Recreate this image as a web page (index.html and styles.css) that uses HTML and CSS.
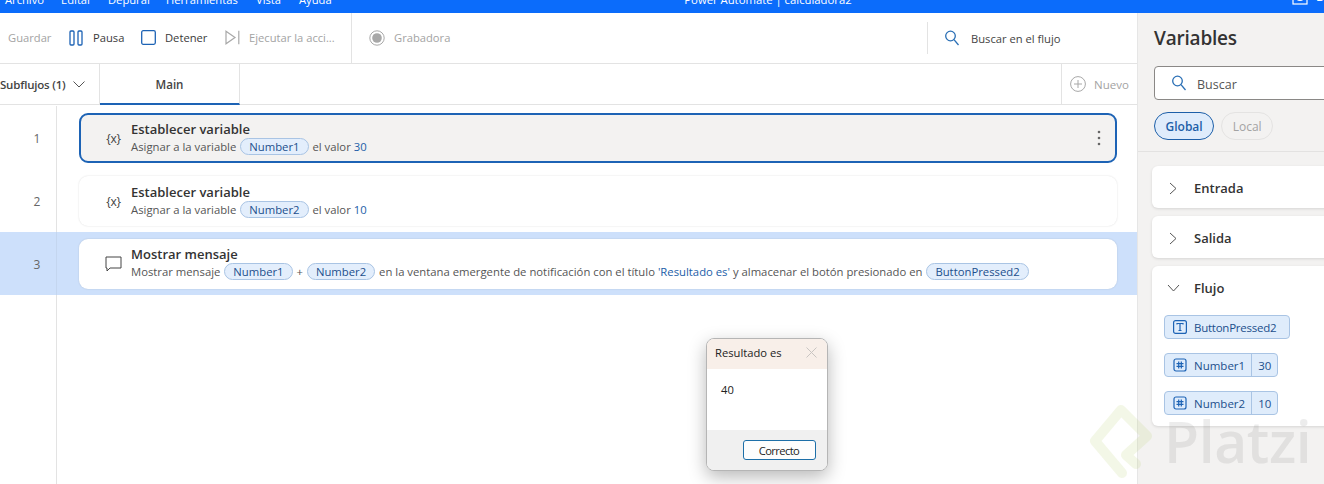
FILE: index.html
```html
<!DOCTYPE html>
<html lang="es">
<head>
<meta charset="utf-8">
<title>Power Automate | calculadora2</title>
<link rel="stylesheet" href="styles.css">
</head>
<body>
<div class="app">
  <header class="titlebar">
    <nav class="menu">
      <span class="m1">Archivo</span><span class="m2">Editar</span><span class="m3">Depurar</span><span class="m4">Herramientas</span><span class="m5">Vista</span><span class="m6">Ayuda</span>
    </nav>
    <div class="apptitle">Power Automate | calculadora2</div>
    <div class="account">
      <svg width="16" height="16" viewBox="0 0 16 16" fill="none" stroke="#fff" stroke-width="1.2"><rect x="1" y="1" width="14" height="14"/><circle cx="8" cy="8" r="3.500"/></svg>
      <span>B</span>
    </div>
  </header>
  <div class="workspace">
    <main class="main">
      <div class="toolbar">
        <div class="tool-group">
          <span class="tool muted save">Guardar</span>
          <span class="tool pause">
            <svg width="14" height="16" viewBox="0 0 14 16" fill="none" stroke="#1d63b5" stroke-width="1.3"><rect x="1" y="1" width="4" height="14" rx="1"/><rect x="9" y="1" width="4" height="14" rx="1"/></svg>
            Pausa</span>
          <span class="tool stop">
            <svg width="15" height="15" viewBox="0 0 15 15" fill="none" stroke="#1d63b5" stroke-width="1.3"><rect x=".7" y=".7" width="13.600" height="13.600" rx="1.500"/></svg>
            Detener</span>
          <span class="tool muted run">
            <svg width="15" height="15" viewBox="0 0 15 15" fill="none" stroke="#a8a8a8" stroke-width="1.2"><path d="M1 1.200 10 7.500 1 13.800Z"/><path d="M13.800 .8V14.200"/></svg>
            Ejecutar la acci...</span>
        </div>
        <div class="tool-group rec">
          <span class="tool muted">
            <svg width="16" height="16" viewBox="0 0 16 16"><circle cx="8" cy="8" r="7.200" fill="none" stroke="#a8a8a8"/><circle cx="8" cy="8" r="4.800" fill="#a8a8a8"/></svg>
            Grabadora</span>
        </div>
        <div class="flow-search">
          <svg width="16" height="16" viewBox="0 0 16 16" fill="none" stroke="#2a6fb5" stroke-width="1.3"><circle cx="6.500" cy="6" r="4.800"/><path d="M10 9.700 14.500 15"/></svg>
          <span>Buscar en el flujo</span>
        </div>
      </div>
      <div class="tabs">
        <div class="subflows">Subflujos (1)
          <svg width="12" height="7" viewBox="0 0 12 7" fill="none" stroke="#555" stroke-width="1"><path d="M.5.5 6 6l5.500-5.500"/></svg>
        </div>
        <div class="tab">Main</div>
        <div class="new">
          <svg width="16" height="16" viewBox="0 0 16 16" fill="none" stroke="#a8a8a8"><circle cx="8" cy="8" r="7.400"/><path d="M8 4v8M4 8h8"/></svg>
          Nuevo
        </div>
      </div>
      <div class="flow">
        <div class="row">
          <div class="num">1</div>
          <div class="lane">
            <div class="card selected">
              <div class="aicon">{x}</div>
              <div class="atext">
                <div class="atitle">Establecer variable</div>
                <div class="adesc">Asignar a la variable <span class="pill">Number1</span> el valor <span class="val">30</span></div>
              </div>
              <svg class="dots" width="4" height="16" viewBox="0 0 4 16" fill="#666"><circle cx="2" cy="2" r="1.300"/><circle cx="2" cy="8" r="1.300"/><circle cx="2" cy="14" r="1.300"/></svg>
            </div>
          </div>
        </div>
        <div class="row">
          <div class="num">2</div>
          <div class="lane">
            <div class="card">
              <div class="aicon">{x}</div>
              <div class="atext">
                <div class="atitle">Establecer variable</div>
                <div class="adesc">Asignar a la variable <span class="pill">Number2</span> el valor <span class="val">10</span></div>
              </div>
            </div>
          </div>
        </div>
        <div class="row active">
          <div class="num">3</div>
          <div class="lane">
            <div class="card">
              <div class="aicon">
                <svg width="17" height="16" viewBox="0 0 17 16" fill="none" stroke="#444" stroke-width="1"><path d="M1 1h15v11H5l-3 3v-3H1z"/></svg>
              </div>
              <div class="atext">
                <div class="atitle">Mostrar mensaje</div>
                <div class="adesc">Mostrar mensaje <span class="pill">Number1</span> + <span class="pill">Number2</span> en la ventana emergente de notificación con el título <span class="val">'Resultado es'</span> y almacenar el botón presionado en <span class="pill">ButtonPressed2</span></div>
              </div>
            </div>
          </div>
        </div>
        <div class="rest"></div>
      </div>
    </main>
    <aside class="panel">
      <h2 class="panel-title">Variables</h2>
      <div class="search">
        <svg width="16" height="16" viewBox="0 0 16 16" fill="none" stroke="#2a6fb5" stroke-width="1.3"><circle cx="6.500" cy="6" r="4.800"/><path d="M10 9.700 14.500 15"/></svg>
        <span class="search-label">Buscar</span>
      </div>
      <div class="scopes">
        <span class="scope on">Global</span>
        <span class="scope">Local</span>
      </div>
      <div class="sections">
        <section class="sec">
          <div class="sec-head"><svg width="8" height="13" viewBox="0 0 8 13" fill="none" stroke="#555"><path d="M1 1l6 5.500-6 5.500"/></svg>Entrada</div>
        </section>
        <section class="sec">
          <div class="sec-head"><svg width="8" height="13" viewBox="0 0 8 13" fill="none" stroke="#555"><path d="M1 1l6 5.500-6 5.500"/></svg>Salida</div>
        </section>
        <section class="sec open">
          <div class="sec-head"><svg width="13" height="8" viewBox="0 0 13 8" fill="none" stroke="#555"><path d="M1 1l5.500 6 5.500-6"/></svg>Flujo</div>
          <div class="vars">
            <div class="var">
              <span class="vname text-var"><svg width="14" height="14" viewBox="0 0 14 14" fill="none" stroke="#1d63b5" stroke-width="1.2"><rect x=".6" y=".6" width="12.800" height="12.800" rx="2"/><path d="M4 4.500V3.500h6v1M7 3.500v7M5.500 10.500h3"/></svg>ButtonPressed2</span>
            </div>
            <div class="var">
              <span class="vname"><svg width="14" height="14" viewBox="0 0 14 14" fill="none" stroke="#1d63b5" stroke-width="1.2"><rect x="1" y="1" width="12" height="12" rx="2"/><path d="M5.700 3.500v7M8.300 3.500v7M3.500 5.700h7M3.500 8.300h7"/></svg>Number1</span><span class="vval">30</span>
            </div>
            <div class="var">
              <span class="vname"><svg width="14" height="14" viewBox="0 0 14 14" fill="none" stroke="#1d63b5" stroke-width="1.2"><rect x="1" y="1" width="12" height="12" rx="2"/><path d="M5.700 3.500v7M8.300 3.500v7M3.500 5.700h7M3.500 8.300h7"/></svg>Number2</span><span class="vval">10</span>
            </div>
          </div>
        </section>
      </div>
    </aside>
  </div>
  <div class="dialog">
    <div class="dlg-title"><span>Resultado es</span>
      <svg width="11" height="11" viewBox="0 0 11 11" stroke="#c9c5c2" fill="none"><path d="M.5.500l10 10M10.500.500l-10 10"/></svg>
    </div>
    <div class="dlg-body">40</div>
    <div class="dlg-foot"><span class="dlg-btn">Correcto</span></div>
  </div>
  <div class="watermark">
    <svg width="64" height="76" viewBox="0 0 64 76" fill="none" stroke="#b8d070" stroke-opacity=".17" stroke-width="10" stroke-linejoin="round" stroke-linecap="round"><path d="M33 70 6 38 32 7l26 26-21 19 10 9"/></svg>
    <span>Platzi</span>
  </div>
</div>
</body>
</html>
```
FILE: styles.css
```css
* { box-sizing: border-box; }
html, body { margin: 0; padding: 0; }
body {
  width: 1324px; height: 484px; overflow: hidden; background: #fff;
  font-family: "Open Sans", "Noto Sans", sans-serif; font-size: 12px; color: #333;
}
.app { position: relative; width: 1324px; height: 484px; overflow: hidden; display: flex; flex-direction: column; }

.titlebar { height: 13px; flex: none; background: #0b6cfb; color: #fff; position: relative; overflow: hidden; display: flex; justify-content: center; align-items: flex-end; }
.menu { position: absolute; left: 5px; bottom: 5px; display: flex; line-height: 16px; }
.m1 { width: 56px; } .m2 { width: 47px; } .m3 { width: 58px; } .m4 { width: 90px; } .m5 { width: 43px; }
.menu span { font-size: 11.200px; }
.apptitle { font-size: 11.300px; line-height: 16px; margin: 0 0 5px 212px; }
.account { position: absolute; right: 0; top: -11px; width: 32px; display: flex; gap: 8px; font-size: 12px; line-height: 16px; }

.workspace { flex: 1; display: flex; min-height: 0; }
.main { width: 1138px; flex: none; display: flex; flex-direction: column; border-right: 1px solid #e6e6e6; }

.toolbar { height: 51px; flex: none; display: flex; align-items: center; border-bottom: 1px solid #e3e3e3; }
.tool-group { display: flex; align-items: center; height: 50px; }
.tool-group:first-child { width: 352px; border-right: 1px solid #e3e3e3; padding-left: 8px; }
.tool { display: flex; align-items: center; gap: 9px; font-size: 11.200px; white-space: nowrap; color: #3a3a3a; margin-top: -1px; }
.muted { color: #a3a3a3; }
.save { width: 61px; }
.pause { width: 72px; gap: 10px; }
.stop { width: 84px; }
.rec { padding-left: 17px; }
.flow-search { margin-left: auto; width: 210px; height: 32px; border-left: 1px solid #e3e3e3; display: flex; align-items: center; gap: 11px; padding-left: 16px; font-size: 11.200px; color: #444; }

.tabs { height: 41px; flex: none; display: flex; border-bottom: 1px solid #e3e3e3; }
.subflows { width: 100px; display: flex; align-items: center; gap: 7px; font-weight: 600; font-size: 11.500px; color: #444; white-space: nowrap; border-right: 1px solid #e3e3e3; letter-spacing: -.2px; }
.tab { width: 140px; border-right: 1px solid #e3e3e3; border-bottom: 2px solid #1d63b5; margin-bottom: -1px; padding-top: 2px; display: flex; align-items: center; justify-content: center; font-weight: 600; font-size: 11.600px; color: #444; }
.new { margin-left: auto; width: 76px; border-left: 1px solid #e3e3e3; display: flex; align-items: center; gap: 8px; padding-left: 8px; color: #a3a3a3; font-size: 11.500px; }

.flow { flex: 1; display: flex; flex-direction: column; padding-top: 1px; min-height: 0; }
.row { height: 63px; flex: none; display: flex; }
.row.active { background: #cde0fb; }
.num { width: 57px; flex: none; border-right: 1px solid #e3e3e3; display: flex; align-items: center; justify-content: center; padding: 2px 0 0 18px; color: #666; }
.row.active .num { border-right-color: #c4d6ef; }
.lane { flex: 1; padding: 7px 20px 6px 22px; display: flex; }
.rest { flex: 1; width: 57px; border-right: 1px solid #e3e3e3; }
.card { flex: 1; background: #fff; border-radius: 9px; display: flex; align-items: center; position: relative; box-shadow: 0 0 2px rgba(0,0,0,.14); }
.card.selected { background: #f3f2f1; border: 2px solid #1d63b5; box-shadow: none; }
.aicon { width: 52px; flex: none; display: flex; justify-content: center; font-size: 12px; color: #444; padding-left: 17px; white-space: nowrap; letter-spacing: -.3px; }
.selected .aicon { width: 48px; margin-right: 2px; }
.atext { padding-top: 2px; }
.active .atext { padding-top: 0; }
.atitle { font-size: 13px; font-weight: 600; color: #333; line-height: 16px; white-space: nowrap; margin-top: -1px; }
.adesc { font-size: 11.300px; color: #555; line-height: 18px; white-space: nowrap; margin-top: 1px; }
.pill { display: inline-block; height: 17px; line-height: 15px; border: 1px solid #a9c4e4; border-radius: 9px; background: #e3eefc; color: #1c4f8c; padding: 0 8px; margin: 0 1px; vertical-align: top; }
.val { color: #1c5ea8; }
.dots { position: absolute; right: 14px; top: 15px; }

.panel { flex: 1; background: #f3f2f1; padding: 0 0 0 16px; min-width: 0; display: flex; flex-direction: column; }
.panel-title { margin: 11px 0 14px; font-size: 19px; font-weight: 600; line-height: 28px; color: #333; letter-spacing: -.2px; }
.search { width: 190px; height: 34px; flex: none; background: #fff; border: 1px solid #8a8886; border-radius: 4px; display: flex; align-items: center; gap: 10px; padding-left: 16px; font-size: 12.500px; color: #555; }
.search-label { padding-top: 2px; }
.scopes { display: flex; gap: 7px; margin-top: 12px; height: 39px; }
.scope { height: 28px; padding: 0 10.500px; border: 1px solid #e4e3e2; border-radius: 14px; display: flex; align-items: center; color: #a3a3a3; font-size: 12px; }
.scope.on { background: #dfecfb; border-color: #1d5fa8; color: #1d5fa8; font-weight: 600; padding: 0 10.500px; }
.sections { margin-left: -16px; border-top: 1px solid #e3e2e1; padding: 14px 0 0 14px; display: flex; flex-direction: column; gap: 8px; }
.sec { width: 190px; height: 42px; background: #fff; border-radius: 6px; box-shadow: 0 1px 3px rgba(0,0,0,.12); }
.sec.open { height: 160px; }
.sec-head { height: 42px; display: flex; align-items: center; gap: 17px; padding: 2px 0 0 17px; font-size: 13px; font-weight: 600; color: #333; }
.open .sec-head { gap: 14px; padding-left: 15px; }
.vars { padding: 7px 0 0 12px; display: flex; flex-direction: column; gap: 14px; }
.var { align-self: flex-start; height: 24px; display: flex; background: #dfecfb; border: 1px solid #a9c4e4; border-radius: 4px; color: #1c4f8c; font-size: 11.500px; }
.vname { display: flex; align-items: center; gap: 7px; padding: 0 6px 0 8px; }
.text-var { padding-right: 13px; letter-spacing: -.25px; }
.vval { border-left: 1px solid #a9c4e4; padding: 0 6px; display: flex; align-items: center; }

.dialog { position: absolute; left: 706px; top: 338px; width: 122px; height: 133px; border: 1px solid #b5b5b5; border-radius: 8px; overflow: hidden; display: flex; flex-direction: column; background: #fff; box-shadow: 0 6px 18px rgba(0,0,0,.28); font-size: 11.200px; color: #222; }
.dlg-title { height: 30px; flex: none; background: #f8efe9; display: flex; justify-content: space-between; align-items: center; padding: 0 10px 3px 8px; }
.dlg-body { flex: 1; padding: 13px 14px; }
.dlg-foot { height: 40px; flex: none; background: #f0f0f0; display: flex; align-items: center; justify-content: flex-end; padding-right: 11px; }
.dlg-btn { width: 73px; height: 20px; border: 1px solid #1d6fa8; border-radius: 3px; background: #fdfdfd; display: flex; align-items: center; justify-content: center; letter-spacing: -.6px; padding-right: 1px; }

.watermark { position: absolute; left: 1089px; top: 403px; display: flex; align-items: center; gap: 11px; pointer-events: none; }
.watermark span { font-size: 57px; font-weight: 600; color: rgba(110,110,110,.13); line-height: 60px; letter-spacing: -.4px; }
```
